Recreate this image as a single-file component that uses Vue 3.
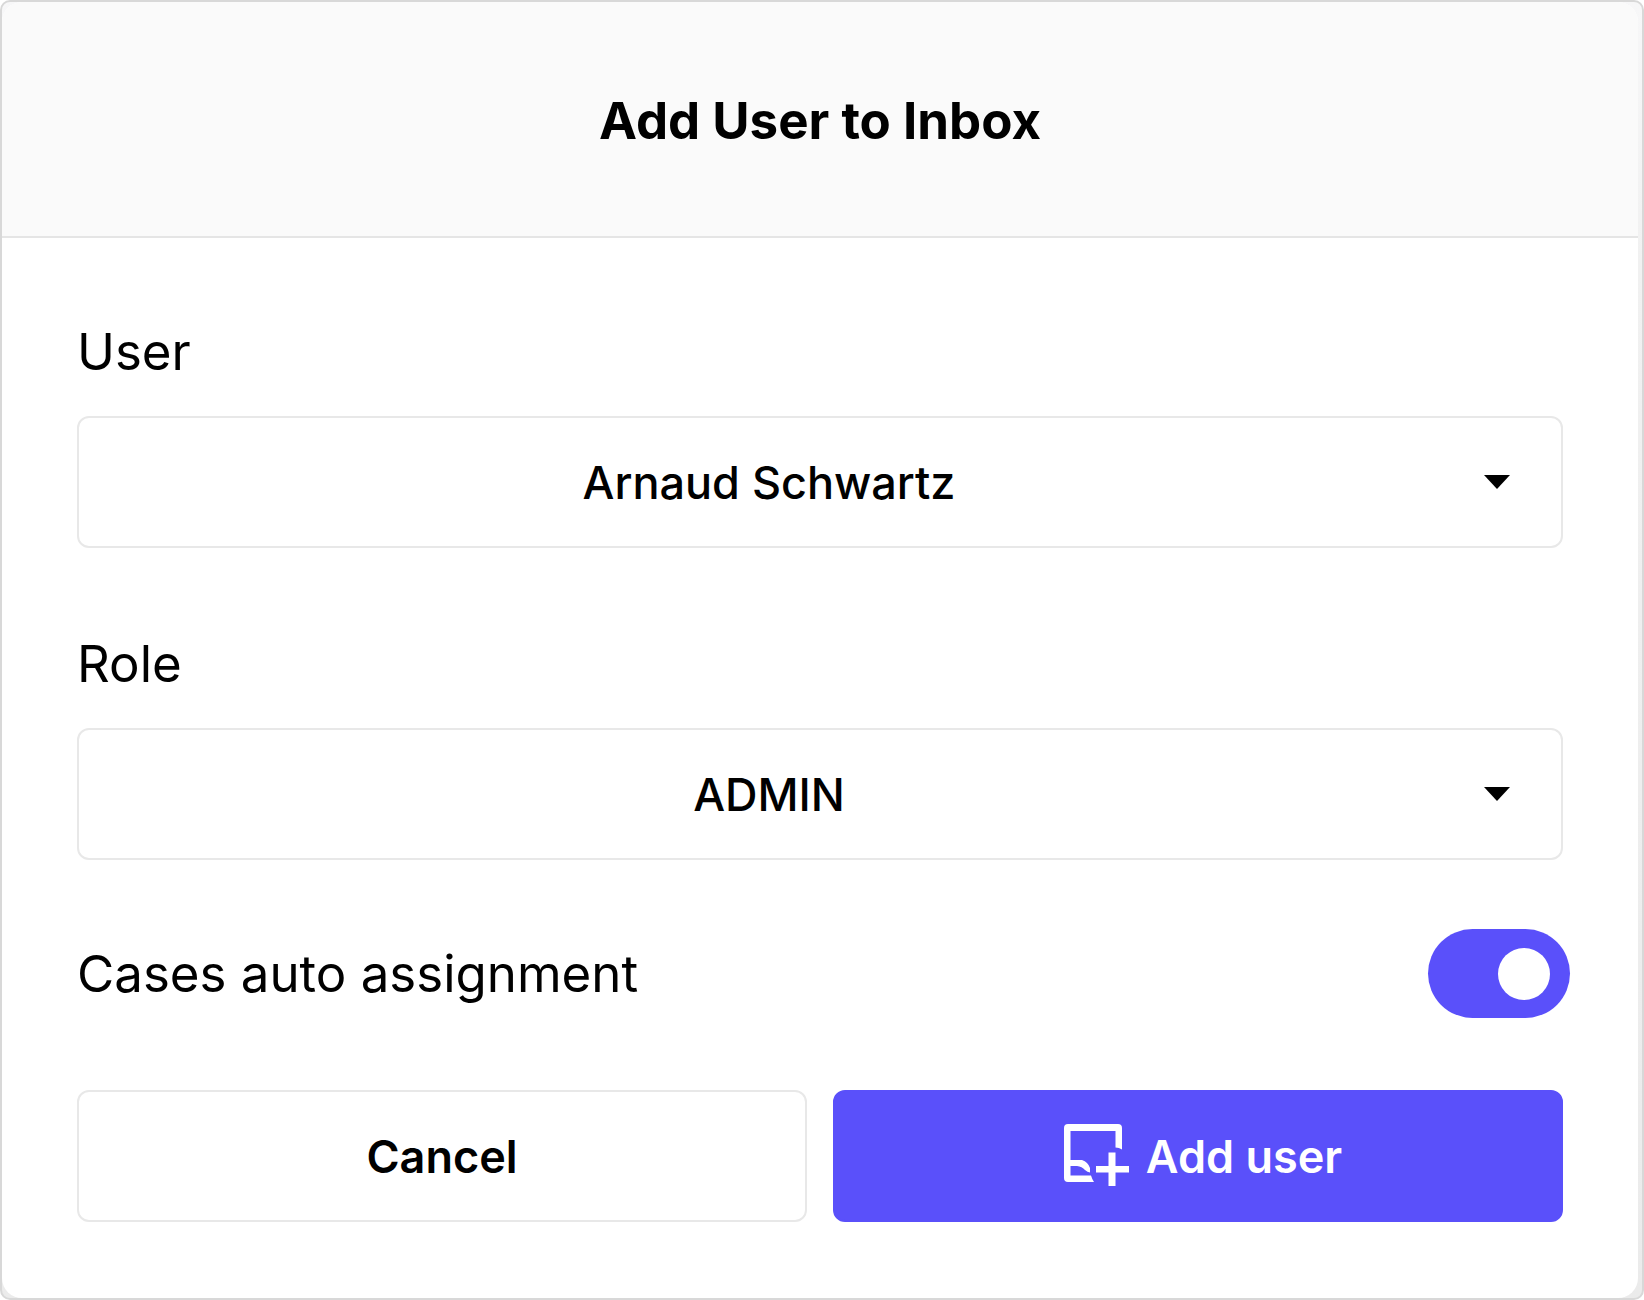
<script setup>
import { ref } from 'vue'

const users = ['Arnaud Schwartz']
const roles = ['ADMIN']
const user = ref(users[0])
const role = ref(roles[0])
const autoAssign = ref(true)
</script>

<template>
  <main class="frame">
    <form class="dialog" @submit.prevent>
      <header class="header">
        <h1 class="title">Add User to Inbox</h1>
      </header>
      <div class="content">
        <div class="fields">
          <div class="field">
            <label class="label" for="user">User</label>
            <div class="picker">
              <select id="user" v-model="user" class="select">
                <option v-for="name in users" :key="name">{{ name }}</option>
              </select>
              <svg class="caret" viewBox="0 0 26 14" aria-hidden="true"><path d="M0 0H26L13 14Z" /></svg>
            </div>
          </div>
          <div class="field">
            <label class="label" for="role">Role</label>
            <div class="picker">
              <select id="role" v-model="role" class="select">
                <option v-for="name in roles" :key="name">{{ name }}</option>
              </select>
              <svg class="caret" viewBox="0 0 26 14" aria-hidden="true"><path d="M0 0H26L13 14Z" /></svg>
            </div>
          </div>
        </div>
        <div class="assignment">
          <label class="label" for="auto">Cases auto assignment</label>
          <input id="auto" v-model="autoAssign" class="toggle" type="checkbox" role="switch" />
        </div>
        <div class="actions">
          <button class="button" type="button">Cancel</button>
          <button class="button primary" type="submit">
            <svg class="icon" viewBox="0 0 66 64" fill="currentColor" aria-hidden="true">
              <path d="M4 0H54Q58 0 58 4V25.5Q55 23.5 51.5 23.5V7H6.5V36H18Q24 38 26 44V48.5Q23.500 48 21 46Q18 42.500 13 42H6.500V51.500H27Q28 55 30 58H4Q0 58 0 54V4Q0 0 4 0Z" />
              <path d="M32 42H44.500V28.500H51.500V42H65V48.500H51.500V62H44.500V48.500H32Z" />
            </svg>
            <span>Add user</span>
          </button>
        </div>
      </div>
    </form>
  </main>
</template>

<style>
body {
  margin: 0;
  background: #ffffff;
}
</style>

<style scoped>
.frame {
  box-sizing: border-box;
  display: flex;
  min-height: 100vh;
  padding-right: 4px;
  border: 2px solid #d8d8d8;
  border-radius: 10px;
  background: linear-gradient(#f7f7f8, #f1f1f1 20%, #ebebeb);
  overflow: hidden;
  font-family: Inter, "Liberation Sans", sans-serif;
  color: #000000;
}

.dialog {
  flex: 1;
  min-width: 0;
  border-radius: 20px;
  background: #ffffff;
  overflow: hidden;
}

.header {
  padding: 88px 20px 84px;
  border-bottom: 2px solid #e5e5e5;
  background: #fafafa;
}

.title {
  margin: 0;
  font-size: 51px;
  font-weight: 700;
  line-height: 62px;
  text-align: center;
}

.content {
  padding: 82px 75px 72px;
}

.fields {
  display: flex;
  flex-direction: column;
  gap: 84px;
  margin-bottom: 69px;
}

.label {
  display: block;
  font-size: 51px;
  font-weight: 400;
  line-height: 64px;
}

.picker {
  display: flex;
  align-items: center;
  position: relative;
  margin-top: 32px;
}

.select {
  flex: 1;
  box-sizing: border-box;
  height: 132px;
  margin: 0;
  padding: 0 102px 0 0;
  border: 2px solid #e8e8e8;
  border-radius: 12px;
  appearance: none;
  background: #ffffff;
  color: inherit;
  font-family: inherit;
  font-size: 45px;
  font-weight: 500;
  text-align: center;
  text-align-last: center;
}

.caret {
  position: absolute;
  right: 53px;
  width: 26px;
  height: 14px;
  pointer-events: none;
}

.assignment {
  display: flex;
  align-items: center;
  justify-content: space-between;
  margin-right: -7px;
  margin-bottom: 72px;
}

.toggle {
  display: flex;
  align-items: center;
  box-sizing: border-box;
  width: 142px;
  height: 89px;
  margin: 0;
  padding: 0 20px;
  border-radius: 45px;
  appearance: none;
  background: #b8b8b8;
}

.toggle::before {
  content: "";
  width: 52px;
  height: 52px;
  border-radius: 50%;
  background: #ffffff;
}

.toggle:checked {
  justify-content: flex-end;
  background: #5a50fa;
}

.actions {
  display: grid;
  grid-template-columns: 1fr 1fr;
  gap: 26px;
}

.button {
  display: flex;
  align-items: center;
  justify-content: center;
  gap: 16px;
  height: 132px;
  padding: 0;
  border: 2px solid #e8e8e8;
  border-radius: 12px;
  background: #ffffff;
  color: inherit;
  font-family: inherit;
  font-size: 45px;
  font-weight: 600;
}

.primary {
  padding-left: 10px;
  border-color: #5a50fa;
  background: #5a50fa;
  color: #ffffff;
}

.icon {
  width: 66px;
  height: 64px;
}
</style>
